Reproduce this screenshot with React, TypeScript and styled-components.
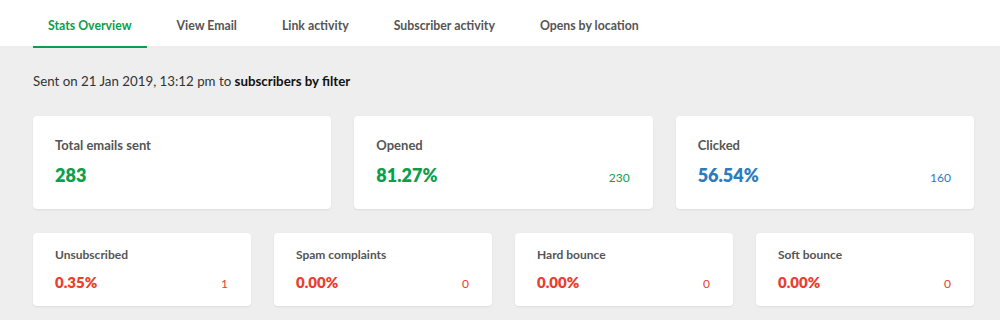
import React from 'react';
import styled, { createGlobalStyle } from 'styled-components';

const GlobalStyle = createGlobalStyle`
    html, body {
        margin: 0;
        padding: 0;
        background: #eeeeee;
        font-family: Lato, "Open Sans", sans-serif;
    }
`;

const Page = styled.div`
    width: 1000px;
    height: 320px;
    overflow: hidden;
    background: #eeeeee;
`;

const Nav = styled.nav`
    display: flex;
    gap: 15px;
    padding: 0 0 0 33px;
    height: 46px;
    background: #ffffff;
    border-bottom: 2px solid #ececec;
`;

interface TabProps {
    active?: boolean;
}

const Tab = styled.a<TabProps>`
    display: flex;
    align-items: center;
    padding: 4px 15px 0 15px;
    margin-bottom: -2px;
    font-size: 12.3px;
    font-weight: 700;
    color: ${({ active }) => active ? '#0aa04b' : '#555555'};
    border-bottom: 2px solid ${({ active }) => active ? '#0aa04b' : 'transparent'};
    cursor: pointer;
`;

const Content = styled.div`
    padding: 25px 26px 0 33px;
`;

const SentLine = styled.p`
    margin: 0 0 27px 0;
    font-size: 13.3px;
    color: #333333;

    b {
        color: #111111;
    }
`;

const Grid = styled.div<{ cols: number }>`
    display: grid;
    grid-template-columns: repeat(${({ cols }) => cols}, 1fr);
    gap: 23px;
    margin-bottom: 24px;
`;

const Card = styled.div<{ big?: boolean }>`
    display: flex;
    flex-direction: column;
    justify-content: center;
    gap: 11px;
    height: ${({ big }) => big ? '93px' : '73px'};
    box-sizing: border-box;
    padding: 0 23px 2px 22px;
    background: #ffffff;
    border-radius: 4px;
    box-shadow: 0 1px 2px rgba(0, 0, 0, 0.08);
`;

const Title = styled.div<{ big?: boolean }>`
    font-size: ${({ big }) => big ? '13px' : '12px'};
    font-weight: 700;
    color: #555555;
`;

const Row = styled.div`
    display: flex;
    align-items: baseline;
    justify-content: space-between;
`;

const Value = styled.span<{ color: string; big?: boolean }>`
    font-size: ${({ big }) => big ? '18px' : '15px'};
    font-weight: 800;
    color: ${({ color }) => color};
`;

const Count = styled.span<{ color: string }>`
    font-size: 12px;
    color: ${({ color }) => color};
`;

const GREEN = '#0aa04b';
const BLUE = '#2a7cbf';
const RED = '#e8402f';

const tabs = ['Stats Overview', 'View Email', 'Link activity', 'Subscriber activity', 'Opens by location'];

interface Stat {
    title: string;
    value: string;
    count?: string;
    color: string;
}

const mainStats: Stat[] = [
    { title: 'Total emails sent', value: '283', color: GREEN },
    { title: 'Opened', value: '81.27%', count: '230', color: GREEN },
    { title: 'Clicked', value: '56.54%', count: '160', color: BLUE },
];

const badStats: Stat[] = [
    { title: 'Unsubscribed', value: '0.35%', count: '1', color: RED },
    { title: 'Spam complaints', value: '0.00%', count: '0', color: RED },
    { title: 'Hard bounce', value: '0.00%', count: '0', color: RED },
    { title: 'Soft bounce', value: '0.00%', count: '0', color: RED },
];

const StatCard = ({ stat, big }: { stat: Stat; big?: boolean }) => (
    <Card big={big}>
        <Title big={big}>{stat.title}</Title>
        <Row>
            <Value color={stat.color} big={big}>{stat.value}</Value>
            {stat.count && <Count color={stat.color}>{stat.count}</Count>}
        </Row>
    </Card>
);

export default function App() {
    return (
        <Page>
            <GlobalStyle />
            <Nav>
                {tabs.map((tab, index) => (
                    <Tab key={tab} active={index === 0}>{tab}</Tab>
                ))}
            </Nav>
            <Content>
                <SentLine>
                    Sent on 21 Jan 2019, 13:12 pm to <b>subscribers by filter</b>
                </SentLine>
                <Grid cols={3}>
                    {mainStats.map((stat) => <StatCard key={stat.title} stat={stat} big />)}
                </Grid>
                <Grid cols={4}>
                    {badStats.map((stat) => <StatCard key={stat.title} stat={stat} />)}
                </Grid>
            </Content>
        </Page>
    );
}
